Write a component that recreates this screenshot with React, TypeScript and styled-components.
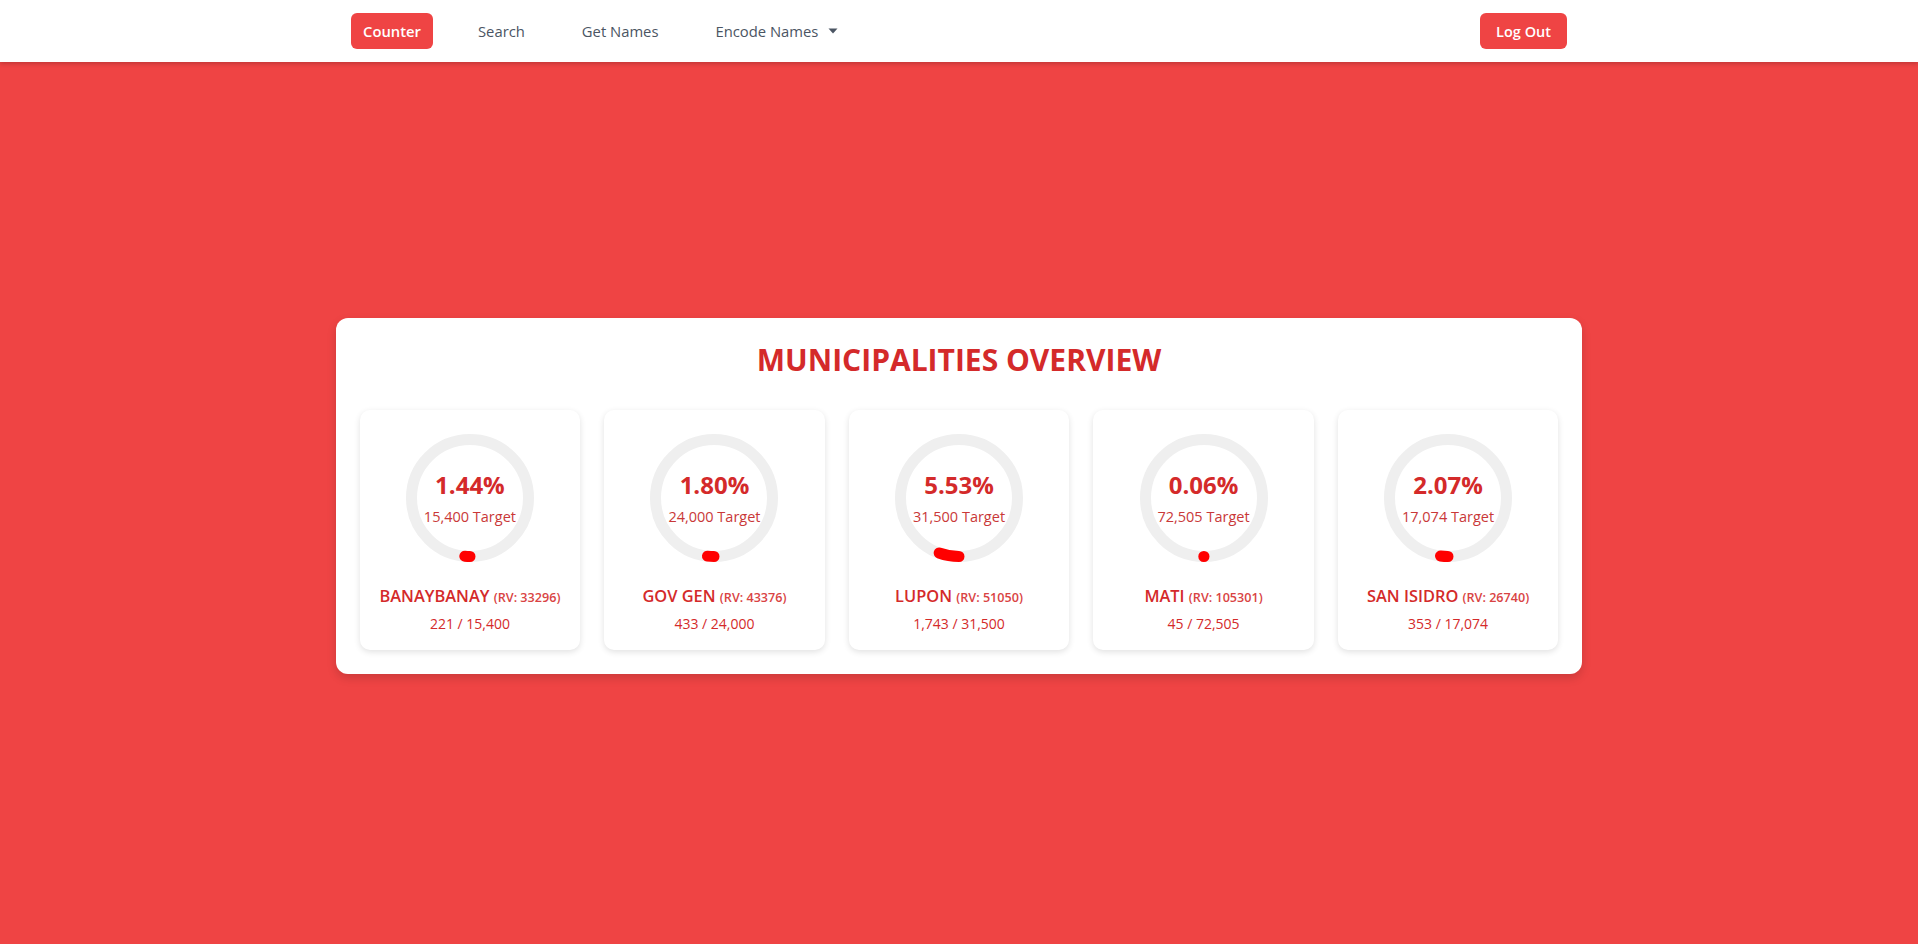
import React from "react";
import styled, { createGlobalStyle } from "styled-components";

const GlobalStyle = createGlobalStyle`
  html, body {
    margin: 0;
    padding: 0;
    background: #ef4444;
    font-family: "Open Sans", "Noto Sans", sans-serif;
  }
  * { box-sizing: border-box; }
`;

const Page = styled.div`
  min-height: 100vh;
  display: flex;
  flex-direction: column;
  background: #ef4444;
`;

const NavBar = styled.nav`
  height: 62px;
  background: #ffffff;
  box-shadow: 0 2px 4px rgba(0, 0, 0, 0.18);
  position: relative;
  z-index: 1;
`;

const NavInner = styled.div`
  max-width: 1280px;
  height: 100%;
  margin: 0 auto;
  padding: 0 32px;
  display: flex;
  align-items: center;
  justify-content: space-between;
`;

const NavLinks = styled.div`
  display: flex;
  align-items: center;
  gap: 33px;
`;

const NavLink = styled.a<{ $active?: boolean }>`
  display: inline-flex;
  align-items: center;
  gap: 10px;
  height: 36px;
  padding: 0 12px;
  border-radius: 6px;
  font-size: 14.8px;
  line-height: 20px;
  font-weight: ${(p) => (p.$active ? 600 : 500)};
  color: ${(p) => (p.$active ? "#ffffff" : "#4b5563")};
  background: ${(p) => (p.$active ? "#ef4444" : "transparent")};
  text-decoration: none;
  cursor: pointer;
`;

const LogoutButton = styled.button`
  height: 36px;
  padding: 0 16px;
  border: none;
  border-radius: 6px;
  background: #ef4444;
  color: #ffffff;
  font-family: inherit;
  font-size: 14.5px;
  font-weight: 600;
  cursor: pointer;
`;

const Main = styled.main`
  flex: 1;
  display: flex;
  align-items: center;
  justify-content: center;
  padding-bottom: 14px;
`;

const Panel = styled.section`
  width: 65%;
  background: #ffffff;
  border-radius: 12px;
  padding: 24px;
  box-shadow: 0 4px 10px rgba(0, 0, 0, 0.15);
`;

const Title = styled.h1`
  margin: 0 0 32px;
  text-align: center;
  font-size: 30px;
  line-height: 36px;
  font-weight: 700;
  color: #d42a2a;
`;

const Grid = styled.div`
  display: grid;
  grid-template-columns: repeat(5, 1fr);
  gap: 24px;
`;

const Card = styled.div`
  background: #ffffff;
  border-radius: 10px;
  padding: 24px 8px 16px;
  box-shadow: 0 2px 6px rgba(0, 0, 0, 0.12);
  display: flex;
  flex-direction: column;
  align-items: center;
`;

const Ring = styled.div`
  position: relative;
  width: 128px;
  height: 128px;
`;

const RingSvg = styled.svg`
  display: block;
  width: 128px;
  height: 128px;
`;

const RingCenter = styled.div`
  position: absolute;
  inset: 0;
  display: flex;
  flex-direction: column;
  align-items: center;
  justify-content: center;
`;

const Percent = styled.div`
  font-size: 24px;
  line-height: 30px;
  font-weight: 700;
  color: #d42a2a;
`;

const Target = styled.div`
  font-size: 14.5px;
  line-height: 20px;
  font-weight: 400;
  color: #c93838;
  margin-top: 7px;
`;

const Name = styled.div`
  margin-top: 22px;
  font-size: 16.4px;
  line-height: 24px;
  font-weight: 600;
  color: #d42a2a;
  white-space: nowrap;
`;

const Rv = styled.span`
  font-size: 12.6px;
  font-weight: 600;
  color: #d94343;
`;

const Count = styled.div`
  margin-top: 4px;
  font-size: 14px;
  line-height: 20px;
  font-weight: 500;
  color: #d42a2a;
`;

const Caret = () => (
  <svg width="10" height="6" viewBox="0 0 10 6" aria-hidden="true">
    <path d="M0.5 0.5 L9.5 0.5 L5 5.5 Z" fill="#4b5563" />
  </svg>
);

type Muni = {
  name: string;
  rv: number;
  count: string;
  target: string;
  pct: number;
};

const data: Muni[] = [
  { name: "BANAYBANAY", rv: 33296, count: "221", target: "15,400", pct: 1.44 },
  { name: "GOV GEN", rv: 43376, count: "433", target: "24,000", pct: 1.8 },
  { name: "LUPON", rv: 51050, count: "1,743", target: "31,500", pct: 5.53 },
  { name: "MATI", rv: 105301, count: "45", target: "72,505", pct: 0.06 },
  { name: "SAN ISIDRO", rv: 26740, count: "353", target: "17,074", pct: 2.07 },
];

const R = 58.5;
const C = 2 * Math.PI * R;

const ProgressRing: React.FC<{ pct: number; target: string }> = ({ pct, target }) => {
  const len = (pct / 100) * C;
  return (
    <Ring>
      <RingSvg viewBox="0 0 128 128">
        <circle cx="64" cy="64" r={R} fill="none" stroke="#efefef" strokeWidth="11" />
        <circle
          cx="64"
          cy="64"
          r={R}
          fill="none"
          stroke="#ff0000"
          strokeWidth="11"
          strokeLinecap="round"
          strokeDasharray={`${len} ${C}`}
          transform="rotate(90 64 64)"
        />
      </RingSvg>
      <RingCenter>
        <Percent>{pct.toFixed(2)}%</Percent>
        <Target>{target} Target</Target>
      </RingCenter>
    </Ring>
  );
};

export default function App() {
  return (
    <>
      <GlobalStyle />
      <Page>
        <NavBar>
          <NavInner>
            <NavLinks>
              <NavLink $active>Counter</NavLink>
              <NavLink>Search</NavLink>
              <NavLink>Get Names</NavLink>
              <NavLink>
                Encode Names
                <Caret />
              </NavLink>
            </NavLinks>
            <LogoutButton>Log Out</LogoutButton>
          </NavInner>
        </NavBar>
        <Main>
          <Panel>
            <Title>MUNICIPALITIES OVERVIEW</Title>
            <Grid>
              {data.map((m) => (
                <Card key={m.name}>
                  <ProgressRing pct={m.pct} target={m.target} />
                  <Name>
                    {m.name} <Rv>(RV: {m.rv})</Rv>
                  </Name>
                  <Count>
                    {m.count} / {m.target}
                  </Count>
                </Card>
              ))}
            </Grid>
          </Panel>
        </Main>
      </Page>
    </>
  );
}
